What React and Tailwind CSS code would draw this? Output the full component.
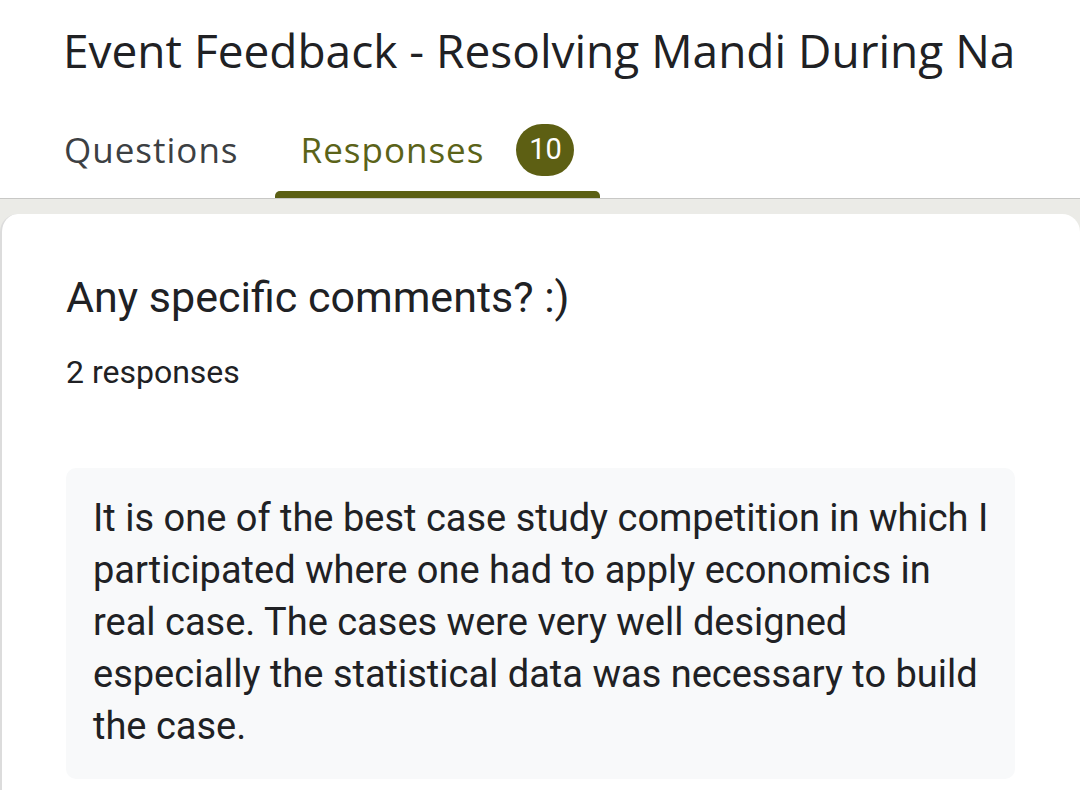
export default function App() {
  return (
    <div className="w-[1080px] h-[790px] overflow-hidden bg-white" style={{ fontFamily: "Roboto, sans-serif" }}>
      <div className="h-[104px] pl-[63px] pt-[27px]">
        <h1 className="text-[46px] leading-none text-[#202124] whitespace-nowrap" style={{ fontFamily: "'Open Sans', sans-serif" }}>
          Event Feedback - Resolving Mandi During Na
        </h1>
      </div>
      <div className="h-[94px] flex items-stretch pl-[38px]" style={{ fontFamily: "'Open Sans', sans-serif" }}>
        <div className="px-[26px] flex items-center text-[35px] tracking-[1px] text-[#3c4043] font-medium pb-[2px]">Questions</div>
        <div className="ml-[10px] relative px-[26px] flex items-center gap-[32px] pb-[2px]">
          <span className="text-[35px] tracking-[1px] text-[#5b6319] font-medium">Responses</span>
          <span className="w-[58px] h-[52px] rounded-full bg-[#5d5f13] text-white text-[29px] flex items-center justify-center" style={{ fontFamily: "Roboto, sans-serif" }}>10</span>
          <div className="absolute left-0 right-0 bottom-0 h-[7px] bg-[#5b5f14] rounded-t-[5px]"></div>
        </div>
      </div>
      <div className="border-t border-[#c8c8c6] bg-[#ebebe7] pt-[15px] h-[600px]">
        <div className="bg-white rounded-t-[18px] border-l-2 border-[#dcdcdc] h-full pl-[64px] pt-[58px]">
          <div className="text-[43px] leading-[50px] text-[#202124]">Any specific comments? :)</div>
          <div className="mt-[32px] text-[32px] leading-[36px] text-[#202124]">2 responses</div>
          <div className="mt-[78px] w-[949px] bg-[#f8f9fa] rounded-[10px] pl-[27px] pr-[20px] pt-[24px] pb-[27px] text-[38px] leading-[52px] text-[#202124]">
            It is one of the best case study competition in which I participated where one had to apply economics in real case. The cases were very well designed especially the statistical data was necessary to build the case.
          </div>
        </div>
      </div>
    </div>
  );
}
